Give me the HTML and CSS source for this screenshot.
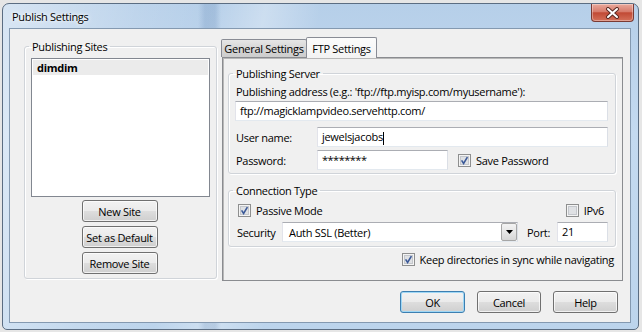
FILE: index.html
```html
<!DOCTYPE html>
<html>
<head>
	<meta charset="UTF-8">
	<title>Publish Settings</title>
	<link rel="stylesheet" href="styles.css">
</head>
<body>
	<div class="window">
		<div class="titlebar">
			<span class="title">Publish Settings</span>
			<span class="close">
				<svg width="17" height="12" viewBox="0 0 17 12">
					<path d="M4 2l9 8M13 2l-9 8" stroke="#5a2a22" stroke-width="4" stroke-linecap="round"/>
					<path d="M4 2l9 8M13 2l-9 8" stroke="#fff" stroke-width="2" stroke-linecap="round"/>
				</svg>
			</span>
		</div>
		<div class="client">
			<div class="main">
				<!-- 左侧：站点列表 -->
				<fieldset class="group sites">
					<legend>Publishing Sites</legend>
					<ul class="sitelist">
						<li class="selected">dimdim</li>
					</ul>
					<div class="sitebtns">
						<span class="btn">New Site</span>
						<span class="btn">Set as Default</span>
						<span class="btn">Remove Site</span>
					</div>
				</fieldset>

				<!-- 右侧：选项卡 -->
				<div class="tabs">
					<div class="tabstrip">
						<span class="tab">General Settings</span>
						<span class="tab active">FTP Settings</span>
					</div>
					<div class="tabpanel">
						<fieldset class="group server">
							<legend>Publishing Server</legend>
							<div class="label">Publishing address (e.g.: 'ftp://ftp.myisp.com/myusername'):</div>
							<div class="field address">ftp://magicklampvideo.servehttp.com/</div>
							<div class="row user">
								<span class="rowlabel">User name:</span>
								<div class="field username">jewelsjacobs<span class="caret"></span></div>
							</div>
							<div class="row pass">
								<span class="rowlabel">Password:</span>
								<div class="field password">********</div>
								<span class="check savepass">
									<svg class="cb" width="13" height="13" viewBox="0 0 13 13"><rect x=".5" y=".5" width="12" height="12" fill="#f4f4f4" stroke="#8e8f8f"/><rect x="2.5" y="2.5" width="8" height="8" fill="#dfe1e4" stroke="#c4c7cc"/><path d="M3.6 6.4l2 3 3.8-6.2" fill="none" stroke="#3b5998" stroke-width="1.6"/></svg>
									Save Password
								</span>
							</div>
						</fieldset>

						<fieldset class="group conn">
							<legend>Connection Type</legend>
							<div class="row modes">
								<span class="check passive">
									<svg class="cb" width="13" height="13" viewBox="0 0 13 13"><rect x=".5" y=".5" width="12" height="12" fill="#f4f4f4" stroke="#8e8f8f"/><rect x="2.5" y="2.5" width="8" height="8" fill="#dfe1e4" stroke="#c4c7cc"/><path d="M3.6 6.4l2 3 3.8-6.2" fill="none" stroke="#3b5998" stroke-width="1.6"/></svg>
									Passive Mode
								</span>
								<span class="check ipv6">
									<svg class="cb" width="13" height="13" viewBox="0 0 13 13"><rect x=".5" y=".5" width="12" height="12" fill="#f4f4f4" stroke="#8e8f8f"/><rect x="2.5" y="2.5" width="8" height="8" fill="#dfe1e4" stroke="#c4c7cc"/></svg>
									IPv6
								</span>
							</div>
							<div class="row security">
								<span class="seclabel">Security</span>
								<div class="select">
									<span class="selvalue">Auth SSL (Better)</span>
									<span class="arrow">
										<svg width="7" height="4" viewBox="0 0 7 4"><path d="M0 0h7L3.5 4z" fill="#000"/></svg>
									</span>
								</div>
								<span class="portlabel">Port:</span>
								<div class="field port">21</div>
							</div>
						</fieldset>

						<div class="row keep">
							<span class="check">
								<svg class="cb" width="13" height="13" viewBox="0 0 13 13"><rect x=".5" y=".5" width="12" height="12" fill="#f4f4f4" stroke="#8e8f8f"/><rect x="2.5" y="2.5" width="8" height="8" fill="#dfe1e4" stroke="#c4c7cc"/><path d="M3.6 6.4l2 3 3.8-6.2" fill="none" stroke="#3b5998" stroke-width="1.6"/></svg>
								Keep directories in sync while navigating
							</span>
						</div>
					</div>
				</div>
			</div>

			<!-- 底部按钮 -->
			<div class="actions">
				<span class="btn ok">OK</span>
				<span class="btn cancel">Cancel</span>
				<span class="btn help">Help</span>
			</div>
		</div>
	</div>
</body>
</html>
```

FILE: styles.css
```css
*{
	box-sizing:border-box;
}

body{
	margin:0;
	padding:3px 4px 0 2px;
	background:#e6e6e6;
	font-family:"Open Sans","Noto Sans",sans-serif;
	font-size:11px;
	letter-spacing:-.3px;
	color:#000;
}

/* 窗口外框 */
.window{
	width:637px;
	height:327px;
	border:1px solid #5b6d82;
	border-radius:7px 7px 5px 5px;
	background:
		linear-gradient(90deg,rgba(255,255,255,0) 195px,rgba(70,110,160,.18) 202px,rgba(70,110,160,.18) 212px,rgba(255,255,255,0) 218px),
		linear-gradient(100deg,rgba(255,255,255,.45) 0,rgba(255,255,255,.1) 20%,rgba(255,255,255,0) 30%,rgba(255,255,255,.3) 38%,rgba(255,255,255,0) 46%),
		linear-gradient(#b6cfe9,#c4daf0 40%,#bcd4ec);
	display:flex;
	flex-direction:column;
}

.titlebar{
	height:24px;
	display:flex;
	align-items:center;
	justify-content:space-between;
	padding-left:9px;
}

.title{
	font-size:11px;
	text-shadow:0 0 6px #fff,0 0 3px #fff;
}

.close{
	align-self:flex-start;
	width:43px;
	height:18px;
	margin-right:4px;
	border:1px solid #7a3a33;
	border-top:none;
	border-radius:0 0 4px 4px;
	background:linear-gradient(#e9a99c,#d77b6b 45%,#c14a35 52%,#d4705a);
	display:flex;
	align-items:center;
	justify-content:center;
	box-shadow:inset 0 0 0 1px rgba(255,255,255,.35);
}

/* 客户区 */
.client{
	flex:1;
	margin:0 7px 6px 6px;
	border:1px solid #8499b0;
	background:#f0f0f0;
	padding:8px 0 0 14px;
	display:flex;
	flex-direction:column;
}

.main{
	display:flex;
	gap:4px;
	margin-right:7px;
}

/* 分组框 */
.group{
	margin:0;
	border:1px solid #d0d4d9;
	border-radius:3px;
	box-shadow:inset 1px 1px 0 #fff,1px 1px 0 #fff;
	min-width:0;
}

.group legend{
	margin-left:-2px;
	padding:0 3px;
	line-height:15px;
}

.sites{
	margin-top:2px;
	width:193px;
	height:240px;
	padding:4px 6px 4px 6px;
}

.sitelist{
	list-style:none;
	margin:0;
	padding:1px;
	width:179px;
	height:139px;
	border:1px solid #828790;
	background:#fff;
}

.sitelist li{
	height:15px;
	line-height:15px;
	padding-left:4px;
	font-weight:bold;
}

.sitelist li.selected{
	background:#ebebeb;
}

.sitebtns{
	display:flex;
	flex-direction:column;
	align-items:center;
	gap:4px;
	margin-top:3px;
	padding-right:2px;
}

/* 按钮 */
.btn{
	display:flex;
	align-items:center;
	justify-content:center;
	height:22px;
	width:76px;
	white-space:nowrap;
	border:1px solid #707070;
	border-radius:3px;
	background:linear-gradient(#f2f2f2,#ebebeb 48%,#dddddd 52%,#cfcfcf);
	box-shadow:inset 0 0 0 1px rgba(255,255,255,.7);
}

/* 选项卡 */
.tabs{
	width:402px;
}

.tabstrip{
	height:21px;
	margin-bottom:-1px;
	display:flex;
	align-items:flex-end;
}

.tab{
	height:18px;
	margin-bottom:1px;
	padding:0 2px;
	line-height:17px;
	text-align:center;
	white-space:nowrap;
	border:1px solid #898c95;
	border-bottom:none;
	border-radius:2px 2px 0 0;
	background:linear-gradient(#e6e6e6,#d6d6d6 50%,#cdcdcd);
}

.tab:first-child{
	width:86px;
}

.tab.active{
	width:71px;
	height:21px;
	margin-bottom:0;
	margin-left:-1px;
	padding-top:2px;
	background:linear-gradient(#fcfcfc,#f3f3f3);
}

.tabpanel{
	margin-left:1px;
	width:401px;
	height:224px;
	border:1px solid #8a8c90;
	box-shadow:inset 1px 1px 0 #b8b8b8;
	background:#f0f0f0;
	padding:8px 6px 0 5px;
}

.server{
	width:388px;
	padding:3px 7px 3px 6px;
}

.label{
	line-height:15px;
	padding-left:1px;
}

.field{
	height:20px;
	border:1px solid;
	border-color:#abadb3 #dbdfe6 #e3e9ef #e2e3ea;
	background:#fff;
	padding:0 4px;
	line-height:18px;
	white-space:nowrap;
}

.address{
	margin-top:2px;
}

.row{
	display:flex;
	align-items:center;
}

.rowlabel{
	width:82px;
	padding-left:1px;
}

.user{
	margin-top:6px;
}

.username{
	width:291px;
}

.caret{
	display:inline-block;
	width:1px;
	height:13px;
	background:#000;
	vertical-align:middle;
}

.pass{
	margin-top:3px;
}

.password{
	width:131px;
	letter-spacing:-.5px;
}

.check{
	display:flex;
	align-items:center;
	gap:5px;
	height:15px;
	white-space:nowrap;
}

.savepass{
	margin-left:10px;
}

.conn{
	width:388px;
	margin-top:9px;
	padding:5px 7px 4px 6px;
}

.modes{
	justify-content:space-between;
	padding:0 4px 0 3px;
}

.security{
	margin-top:4px;
}

.seclabel{
	width:47px;
	padding-left:2px;
}

.select{
	width:236px;
	height:20px;
	border:1px solid;
	border-color:#abadb3 #dbdfe6 #e3e9ef #e2e3ea;
	background:#fff;
	display:flex;
	align-items:center;
	justify-content:space-between;
	padding:0 0 0 6px;
}

.arrow{
	width:16px;
	height:18px;
	border:1px solid #a6a6a6;
	border-radius:2px;
	background:linear-gradient(#f3f3f3,#e6e6e6 50%,#d6d6d6);
	display:flex;
	align-items:center;
	justify-content:center;
}

.portlabel{
	width:30px;
	margin-left:9px;
}

.port{
	width:51px;
}

.keep{
	justify-content:flex-end;
	margin-top:5px;
	margin-right:2px;
}

/* 底部按钮行 */
.actions{
	display:flex;
	justify-content:flex-end;
	gap:12px;
	margin-top:10px;
	margin-right:12px;
}

.ok{
	width:65px;
	border-color:#3c7fb1;
	box-shadow:inset 0 0 0 1px #9fd7f5;
}

.cancel{
	width:64px;
}

.help{
	width:65px;
}
```
